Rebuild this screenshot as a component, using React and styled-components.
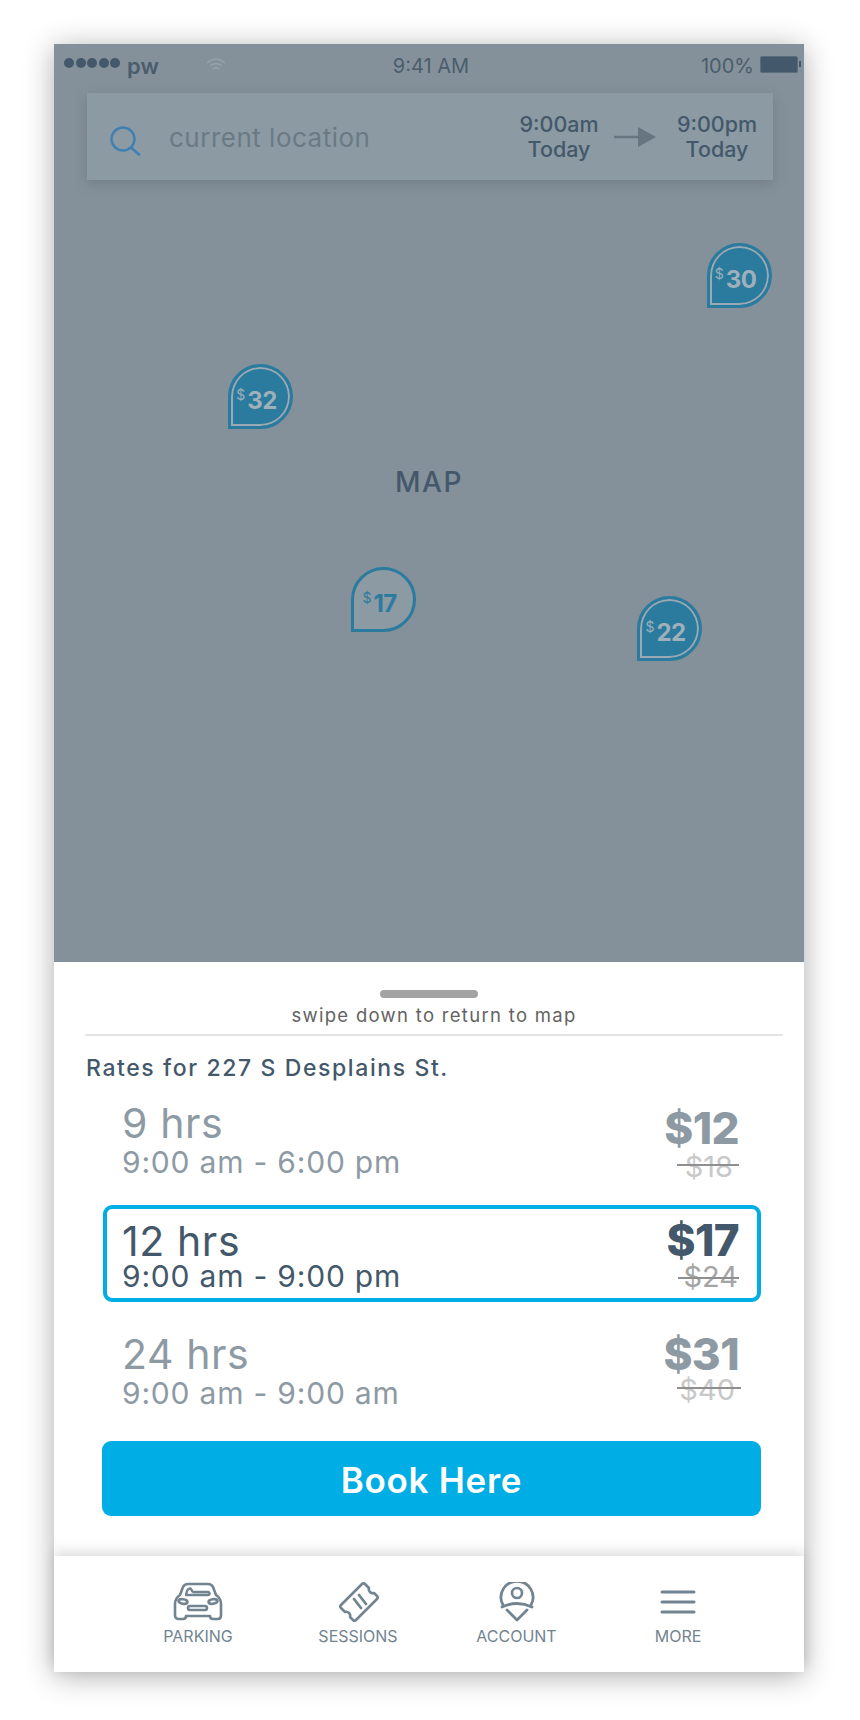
import React from "react";
import styled, { createGlobalStyle } from "styled-components";

const Global = createGlobalStyle`
  html, body { margin: 0; padding: 0; background: #fff; }
  body { font-family: Inter, "Liberation Sans", sans-serif; -webkit-font-smoothing: antialiased; }
`;

const Page = styled.div`
  width: 860px;
  height: 1720px;
  padding: 44px 56px 0 54px;
  box-sizing: border-box;
  overflow: hidden;
`;

const Phone = styled.div`
  width: 750px;
  height: 1628px;
  display: flex;
  flex-direction: column;
  background: #fff;
  box-shadow: 0 4px 28px rgba(0, 0, 0, 0.32);
`;

const MapArea = styled.div`
  position: relative;
  height: 918px;
  flex: none;
  background: #85919a;
  color: #43586a;
`;

const StatusBar = styled.div`
  height: 49px;
  box-sizing: border-box;
  display: grid;
  grid-template-columns: 1fr auto 1fr;
  align-items: center;
  padding: 0 6px 5px 10px;
  font-size: 20px;
  color: #4a5d6c;
`;

const Carrier = styled.div`
  display: flex;
  align-items: center;
  gap: 7px;
  font-weight: 600;
  font-size: 22px;
`;

const Dots = styled.div`
  display: flex;
  gap: 1.5px;
  margin-top: -6px;
`;

const Dot = styled.span`
  width: 10px;
  height: 10px;
  border-radius: 50%;
  background: #43586a;
`;

const WifiIcon = styled.svg`
  margin-left: 38px;
  margin-top: -2px;
  width: 24px;
  height: 18px;
`;

const BatteryGroup = styled.div`
  display: flex;
  justify-content: flex-end;
  align-items: center;
  gap: 6px;
`;

const Battery = styled.div`
  position: relative;
  width: 38px;
  height: 17px;
  margin-top: -4px;
  box-sizing: border-box;
  border: 1px solid #5a6d7a;
  border-radius: 2px;
  background: #43586a;
  &::after {
    content: "";
    position: absolute;
    right: -4px;
    top: 4px;
    width: 2px;
    height: 6px;
    background: #43586a;
  }
`;

const SearchBar = styled.div`
  height: 87px;
  margin: 0 31px 0 33px;
  display: flex;
  align-items: center;
  padding: 0 14px 0 23px;
  background: #8c9aa3;
  box-shadow: 0 4px 12px rgba(50, 60, 70, 0.22);
`;

const SearchIcon = styled.svg`
  width: 32px;
  height: 30px;
  margin-top: 9px;
  flex: none;
`;

const Placeholder = styled.div`
  flex: 1;
  margin: 2px 0 0 27px;
  font-size: 26px;
  letter-spacing: 0.5px;
  color: #6a7a85;
`;

const TimeBlock = styled.div`
  width: 84px;
  text-align: center;
  font-size: 21.5px;
  font-weight: 500;
  line-height: 25px;
  color: #43586a;
`;

const ArrowIcon = styled.svg`
  width: 42px;
  height: 20px;
  margin: 0 19px 0 13px;
`;

const MapLabel = styled.div`
  margin-top: 286px;
  text-align: center;
  font-size: 28px;
  font-weight: 500;
  letter-spacing: 1.5px;
  line-height: 32px;
  color: #43586a;
`;

const Pin = styled.div`
  position: absolute;
  left: ${(p) => p.$x}px;
  top: ${(p) => p.$y}px;
  width: 65px;
  height: 65px;
  box-sizing: border-box;
  display: flex;
  align-items: flex-start;
  justify-content: center;
  padding: 19px 8px 0 0;
  border: 3px solid #2a7b9e;
  border-radius: 50% 50% 50% 0;
  background: ${(p) => (p.$active ? "#8c9aa3" : "#2a7b9e")};
  color: ${(p) => (p.$active ? "#2a7b9e" : "#9fb0bb")};
  box-shadow: ${(p) => (p.$active ? "none" : "inset 0 0 0 2px #9aa9b3")};
`;

const PinCurrency = styled.span`
  font-size: 14px;
  margin-right: 2px;
  line-height: 18px;
`;

const PinAmount = styled.span`
  font-size: 24px;
  font-weight: 700;
  letter-spacing: -0.6px;
  line-height: 30px;
`;

const Sheet = styled.div`
  flex: 1;
  display: flex;
  flex-direction: column;
  align-items: stretch;
`;

const Handle = styled.div`
  width: 98px;
  height: 8px;
  margin: 28px auto 0;
  border-radius: 4px;
  background: #a3a3a3;
`;

const SwipeHint = styled.div`
  margin-top: 6px;
  padding-left: 10px;
  text-align: center;
  font-size: 18.5px;
  line-height: 22px;
  letter-spacing: 1.3px;
  color: #636363;
`;

const Divider = styled.div`
  height: 2px;
  margin: 8px 21px 0 31px;
  background: #e2e4e6;
`;

const RatesTitle = styled.div`
  margin: 20px 0 11px 32px;
  font-size: 23px;
  font-weight: 500;
  line-height: 24px;
  letter-spacing: 1.6px;
  color: #43586a;
`;

const RateList = styled.div`
  display: flex;
  flex-direction: column;
  gap: 20px;
  margin: 0 43px 0 49px;
`;

const RateRow = styled.div`
  box-sizing: border-box;
  height: ${(p) => (p.$compact ? 94 : 97)}px;
  display: flex;
  justify-content: space-between;
  padding: ${(p) => (p.$compact ? 9 : 13)}px 18px 0 15px;
  border: 4px solid ${(p) => (p.$selected ? "#00ade4" : "transparent")};
  border-radius: 9px;
  color: ${(p) => (p.$selected ? "#43586a" : "#8d9aa4")};
`;

const RateInfo = styled.div`
  display: flex;
  flex-direction: column;
`;

const Hours = styled.div`
  font-size: 41px;
  line-height: 38px;
  letter-spacing: 0.6px;
`;

const Span = styled.div`
  margin-top: ${(p) => (p.$compact ? 2 : -2)}px;
  font-size: 30px;
  line-height: 36px;
  letter-spacing: 0.8px;
`;

const PriceCol = styled.div`
  display: flex;
  flex-direction: column;
  align-items: flex-end;
  margin-top: ${(p) => p.$shift}px;
`;

const Price = styled.div`
  font-size: 44px;
  font-weight: 800;
  line-height: 36px;
  letter-spacing: -0.6px;
`;

const OldPrice = styled.div`
  position: relative;
  margin: ${(p) => p.$drop}px ${(p) => p.$inset}px 0 0;
  font-size: 29px;
  line-height: 36px;
  color: ${(p) => (p.$selected ? "#a5a5a5" : "#c8c8c8")};
  &::after {
    content: "";
    position: absolute;
    width: ${(p) => p.$strike}px;
    right: ${(p) => -p.$reach}px;
    top: ${(p) => p.$lineTop}px;
    height: 2px;
    background: #8f8f8f;
  }
`;

const BookButton = styled.button`
  height: 75px;
  margin: 25px 43px 0 48px;
  padding: 3px 0 0;
  border: 0;
  border-radius: 9px;
  background: #00ade4;
  color: #fff;
  font-family: inherit;
  font-size: 35px;
  font-weight: 600;
  letter-spacing: 0.7px;
`;

const TabBar = styled.nav`
  position: relative;
  height: 116px;
  margin-top: auto;
  display: flex;
  padding-left: 64px;
  background: #fff;
  box-shadow: 0 -5px 12px rgba(0, 0, 0, 0.13);
`;

const Tab = styled.div`
  width: 160px;
  display: flex;
  flex-direction: column;
  align-items: center;
  padding-top: 26px;
  padding-right: ${(p) => p.$nudge || 0}px;
  box-sizing: border-box;
`;

const TabIcon = styled.svg`
  width: 52px;
  height: 40px;
  fill: none;
  stroke: #72848f;
  stroke-width: 2.6;
  stroke-linecap: round;
  stroke-linejoin: round;
`;

const TabLabel = styled.span`
  margin-top: 5px;
  font-size: 16px;
  line-height: 18px;
  color: #72848f;
`;

const pins = [
  { x: 653, y: 199, amount: "30" },
  { x: 174, y: 320, amount: "32" },
  { x: 297, y: 523, amount: "17", active: true },
  { x: 583, y: 552, amount: "22" },
];

const rates = [
  {
    hours: "9 hrs", span: "9:00 am - 6:00 pm", price: "$12", old: "$18", compact: true,
    shift: 6, drop: 3, inset: 6, strike: 62, reach: 6, lineTop: 15,
  },
  {
    hours: "12 hrs", span: "9:00 am - 9:00 pm", price: "$17", old: "$24", selected: true,
    shift: 0, drop: 1, inset: 1, strike: 61, reach: 1, lineTop: 18,
  },
  {
    hours: "24 hrs", span: "9:00 am - 9:00 am", price: "$31", old: "$40", compact: true,
    shift: 1, drop: 0, inset: 4, strike: 64, reach: 6, lineTop: 15,
  },
];

function CarGlyph() {
  return (
    <TabIcon viewBox="0 0 52 40">
      <path d="M3 22c0-4 2-7 5-9l3-8c1-2 3-3 5-3h20c2 0 4 1 5 3l3 8c3 2 5 5 5 9v11c0 2-1 4-3 4h-5c-2 0-3-1-3-3H14c0 2-1 3-3 3H6c-2 0-3-2-3-4z" />
      <path d="M14 13l1-4c1-2 3-3 4-2s1 3 2 3h15c2 0 2 3 0 3z" strokeWidth="2.4" />
      <ellipse cx="11" cy="19.5" rx="4.500" ry="2.200" transform="rotate(10 11 19.5)" />
      <ellipse cx="41" cy="19.5" rx="4.500" ry="2.200" transform="rotate(-10 41 19.5)" />
      <rect x="16" y="24" width="19" height="4" rx="2" />
    </TabIcon>
  );
}

function TicketGlyph() {
  return (
    <TabIcon viewBox="0 0 52 40">
      <path d="M33 2l4 4c-1 3 2 6 5 5l3 3c1 1 1 2 0 3L24 38c-1 1-2 1-3 0l-3-3c1-3-2-6-5-5l-4-4c-1-1-1-2 0-3L30 2c1-1 2-1 3 0z" />
      <path d="M22 17l7 9M27 13l7 9" strokeWidth="2.8" />
    </TabIcon>
  );
}

function AccountGlyph() {
  return (
    <TabIcon viewBox="0 0 52 40">
      <path d="M12 23a16 16 0 1 1 28 0" strokeWidth="2.800" />
      <circle cx="26" cy="11" r="5" />
      <path d="M11 25Q26 18 41 25" strokeWidth="2.800" />
      <path d="M16 28l10 10 10-10" strokeWidth="2.800" />
    </TabIcon>
  );
}

function MoreGlyph() {
  return (
    <TabIcon viewBox="0 0 52 40">
      <path d="M10 10h32M10 20h32M10 30h32" strokeWidth="3" />
    </TabIcon>
  );
}

export default function App() {
  return (
    <Page>
      <Global />
      <Phone>
        <MapArea>
          <StatusBar>
            <Carrier>
              <Dots>
                {[0, 1, 2, 3, 4].map((i) => (
                  <Dot key={i} />
                ))}
              </Dots>
              pw
              <WifiIcon viewBox="0 0 24 18" fill="none" stroke="#95a2ab" strokeWidth="1.6">
                <path d="M3 7c5-5 13-5 18 0M6 10c3.500-3 8.500-3 12 0M9 13c2-1.500 4-1.500 6 0" />
              </WifiIcon>
            </Carrier>
            <span>9:41 AM</span>
            <BatteryGroup>
              100%
              <Battery />
            </BatteryGroup>
          </StatusBar>
          <SearchBar>
            <SearchIcon viewBox="0 0 32 30" fill="none" stroke="#3f80b4" strokeWidth="2.4">
              <circle cx="13" cy="13" r="11.500" />
              <path d="M21 21.500l9 8" />
            </SearchIcon>
            <Placeholder>current location</Placeholder>
            <TimeBlock>
              9:00am
              <br />
              Today
            </TimeBlock>
            <ArrowIcon viewBox="0 0 42 20">
              <path d="M0 10h26" stroke="#66757f" strokeWidth="2.400" />
              <path d="M24 0l18 10-18 10z" fill="#66757f" />
            </ArrowIcon>
            <TimeBlock>
              9:00pm
              <br />
              Today
            </TimeBlock>
          </SearchBar>
          <MapLabel>MAP</MapLabel>
          {pins.map((pin) => (
            <Pin key={pin.amount} $x={pin.x} $y={pin.y} $active={pin.active}>
              <PinCurrency>$</PinCurrency>
              <PinAmount>{pin.amount}</PinAmount>
            </Pin>
          ))}
        </MapArea>
        <Sheet>
          <Handle />
          <SwipeHint>swipe down to return to map</SwipeHint>
          <Divider />
          <RatesTitle>Rates for 227 S Desplains St.</RatesTitle>
          <RateList>
            {rates.map((rate) => (
              <RateRow key={rate.hours} $selected={rate.selected} $compact={rate.compact}>
                <RateInfo>
                  <Hours>{rate.hours}</Hours>
                  <Span $compact={rate.compact}>{rate.span}</Span>
                </RateInfo>
                <PriceCol $shift={rate.shift}>
                  <Price>{rate.price}</Price>
                  <OldPrice
                    $selected={rate.selected}
                    $drop={rate.drop}
                    $inset={rate.inset}
                    $strike={rate.strike}
                    $reach={rate.reach}
                    $lineTop={rate.lineTop}
                  >
                    {rate.old}
                  </OldPrice>
                </PriceCol>
              </RateRow>
            ))}
          </RateList>
          <BookButton>Book Here</BookButton>
          <TabBar>
            <Tab>
              <CarGlyph />
              <TabLabel>PARKING</TabLabel>
            </Tab>
            <Tab>
              <TicketGlyph />
              <TabLabel>SESSIONS</TabLabel>
            </Tab>
            <Tab $nudge={3}>
              <AccountGlyph />
              <TabLabel>ACCOUNT</TabLabel>
            </Tab>
            <Tab>
              <MoreGlyph />
              <TabLabel>MORE</TabLabel>
            </Tab>
          </TabBar>
        </Sheet>
      </Phone>
    </Page>
  );
}
